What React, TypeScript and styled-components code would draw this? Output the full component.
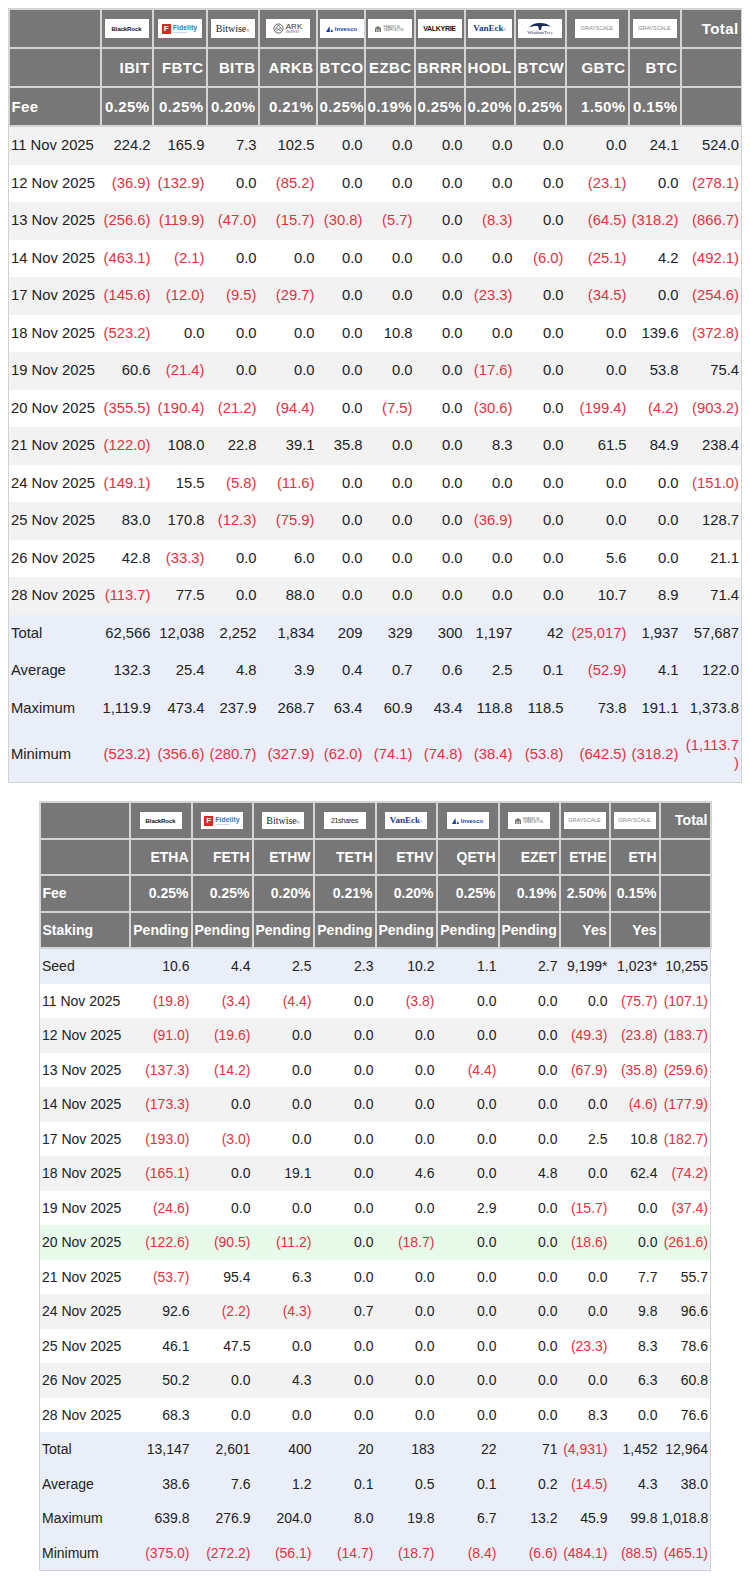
import React, { ReactNode } from 'react';
import styled, { createGlobalStyle } from 'styled-components';

type Brand =
  | 'blackrock'
  | 'fidelity'
  | 'bitwise'
  | 'ark'
  | 'invesco'
  | 'franklin'
  | 'valkyrie'
  | 'vaneck'
  | 'wisdomtree'
  | 'grayscale'
  | '21shares';

type Tone = 'white' | 'gray' | 'blue' | 'green';

interface FundCol {
  brand: Brand;
  ticker: string;
  fee: string;
  staking?: string;
  width: number;
}

interface DataRow {
  label: string;
  values: string[];
  tone: Tone;
}

const GlobalStyle = createGlobalStyle`
  body {
    margin: 8px;
    background: #fff;
    font-family: "Liberation Sans", Arial, sans-serif;
  }
`;

const Page = styled.div`
  display: flex;
  flex-direction: column;
  align-items: center;
  gap: 18px;
`;

const Table = styled.table<{ $compact?: boolean }>`
  border-collapse: collapse;
  table-layout: fixed;
  width: ${(p) => (p.$compact ? 671 : 733)}px;
  border: 1px solid #d2d2d2;
  font-size: ${(p) => (p.$compact ? 14 : 14.8)}px;
  color: #222;
`;

const Col = styled.col<{ $w: number }>`
  width: ${(p) => p.$w}px;
`;

const HeadCell = styled.th<{ $compact?: boolean; $align?: 'left' | 'center' | 'right' }>`
  background: #777;
  color: #fff;
  font-weight: bold;
  font-size: ${(p) => (p.$compact ? 14 : 15)}px;
  letter-spacing: ${(p) => (p.$compact ? 0 : 0.4)}px;
  text-align: ${(p) => p.$align || 'right'};
  height: ${(p) => (p.$compact ? 34.5 : 37)}px;
  padding: 0 2px;
  border: 2px solid #d4d4d4;
  white-space: nowrap;
  overflow: visible;
`;

const Row = styled.tr<{ $tone: Tone }>`
  background: ${(p) =>
    ({ white: '#fff', gray: '#f2f2f2', blue: '#e9eef8', green: '#e8fbea' })[p.$tone]};
`;

const Cell = styled.td<{ $compact?: boolean; $neg?: boolean; $label?: boolean; $wrap?: boolean }>`
  padding: ${(p) => (p.$compact ? '9px 2px' : '10px 2px')};
  line-height: ${(p) => (p.$compact ? 16.5 : 17.5)}px;
  text-align: ${(p) => (p.$label ? 'left' : 'right')};
  color: ${(p) => (p.$neg ? '#e2323d' : '#222')};
  white-space: ${(p) => (p.$wrap ? 'normal' : 'nowrap')};
  overflow-wrap: ${(p) => (p.$wrap ? 'anywhere' : 'normal')};
  overflow: visible;
`;

// ---- logos ----

const LogoBox = styled.span<{ $compact?: boolean }>`
  display: inline-flex;
  align-items: center;
  justify-content: center;
  gap: 2px;
  width: ${(p) => (p.$compact ? 42 : 44)}px;
  height: ${(p) => (p.$compact ? 17 : 19)}px;
  background: #fff;
  overflow: hidden;
  vertical-align: middle;
  letter-spacing: 0;
`;

const Word = styled.span<{
  $size: number;
  $color?: string;
  $weight?: number;
  $serif?: boolean;
  $spacing?: number;
}>`
  font-family: ${(p) =>
    p.$serif ? '"Liberation Serif", "Times New Roman", serif' : '"Liberation Sans", Arial, sans-serif'};
  font-size: ${(p) => p.$size}px;
  font-weight: ${(p) => p.$weight || 400};
  color: ${(p) => p.$color || '#111'};
  letter-spacing: ${(p) => p.$spacing || 0}px;
  line-height: 1;
  white-space: nowrap;
`;

const Stack = styled.span<{ $center?: boolean }>`
  display: inline-flex;
  flex-direction: column;
  align-items: ${(p) => (p.$center ? 'center' : 'flex-start')};
  line-height: 1;
`;

const FidelityMark = styled.span`
  display: inline-flex;
  align-items: center;
  justify-content: center;
  width: 9px;
  height: 10px;
  background: #d52b1e;
  color: #fff;
  font-size: 8px;
  font-weight: bold;
  font-family: "Liberation Sans", Arial, sans-serif;
`;

const logoContent = (brand: Brand): ReactNode => {
  switch (brand) {
    case 'blackrock':
      return (
        <Word $size={6} $weight={700} $spacing={-0.1}>
          BlackRock
        </Word>
      );
    case 'fidelity':
      return (
        <>
          <FidelityMark>F</FidelityMark>
          <Stack>
            <Word $size={7} $color="#3a78c2" $weight={700}>
              Fidelity
            </Word>
            <Word $size={2} $color="#7a9ac2">
              INVESTMENTS
            </Word>
          </Stack>
        </>
      );
    case 'bitwise':
      return (
        <Word $size={10} $serif $color="#222">
          Bitwise
          <Word $size={4} $color="#222">
            ®
          </Word>
        </Word>
      );
    case 'ark':
      return (
        <>
          <svg width="11" height="11" viewBox="0 0 12 12">
            <circle cx="6" cy="6" r="5" fill="none" stroke="#333" strokeWidth="0.8" />
            <path d="M2 8 L6 2 L10 8 M3 5 L9 9 M9 5 L3 9" fill="none" stroke="#333" strokeWidth="0.6" />
          </svg>
          <Stack>
            <Word $size={8} $color="#333">
              ARK
            </Word>
            <Word $size={3.5} $color="#555" $spacing={0.3}>
              INVEST
            </Word>
          </Stack>
        </>
      );
    case 'invesco':
      return (
        <>
          <svg width="7" height="6" viewBox="0 0 7 6">
            <path d="M0 6 L3.5 0 L4 6 Z M4.5 6 L6 3 L7 6 Z" fill="#1a3fa8" />
          </svg>
          <Word $size={6} $weight={700} $color="#1a3fa8">
            Invesco
          </Word>
        </>
      );
    case 'franklin':
      return (
        <>
          <svg width="6" height="6" viewBox="0 0 6 6">
            <path d="M0 6 V2 L3 0 L6 2 V6 Z" fill="#777" />
            <path d="M1.5 6 V3 M3 6 V3 M4.5 6 V3" stroke="#fff" strokeWidth="0.5" />
          </svg>
          <Stack>
            <Word $size={3} $color="#555" $spacing={0.2}>
              FRANKLIN
            </Word>
            <Word $size={3} $color="#555" $spacing={0.2}>
              TEMPLETON
            </Word>
          </Stack>
        </>
      );
    case 'valkyrie':
      return (
        <Word $size={7} $weight={700} $spacing={-0.3} $color="#111">
          VALKYRIE
        </Word>
      );
    case 'vaneck':
      return (
        <Word $size={9} $weight={700} $serif $color="#1b3b8c">
          VanEck
          <Word $size={3} $color="#1b3b8c">
            ®
          </Word>
        </Word>
      );
    case 'wisdomtree':
      return (
        <Stack $center>
          <svg width="26" height="8" viewBox="0 0 26 9">
            <path
              d="M1 6 C4 2 8 1 13 1 C18 1 22 2 25 5 C20 5 17 4 15 5 L14 9 H12 L11 5 C8 4 5 5 1 6 Z"
              fill="#1d2a5c"
            />
          </svg>
          <Word $size={5} $serif $color="#1d2a5c">
            WisdomTree
          </Word>
        </Stack>
      );
    case 'grayscale':
      return (
        <Word $size={5.5} $color="#8a8a8a" $spacing={-0.1}>
          GRAYSCALE
        </Word>
      );
    case '21shares':
      return (
        <Word $size={7} $color="#222" $spacing={-0.2}>
          21shares
        </Word>
      );
  }
};

const Logo: React.FC<{ brand: Brand; compact?: boolean }> = ({ brand, compact }) => (
  <LogoBox $compact={compact}>{logoContent(brand)}</LogoBox>
);

// ---- data ----

const btcCols: FundCol[] = [
  { brand: 'blackrock', ticker: 'IBIT', fee: '0.25%', width: 52 },
  { brand: 'fidelity', ticker: 'FBTC', fee: '0.25%', width: 54 },
  { brand: 'bitwise', ticker: 'BITB', fee: '0.20%', width: 52 },
  { brand: 'ark', ticker: 'ARKB', fee: '0.21%', width: 58 },
  { brand: 'invesco', ticker: 'BTCO', fee: '0.25%', width: 48 },
  { brand: 'franklin', ticker: 'EZBC', fee: '0.19%', width: 50 },
  { brand: 'valkyrie', ticker: 'BRRR', fee: '0.25%', width: 50 },
  { brand: 'vaneck', ticker: 'HODL', fee: '0.20%', width: 50 },
  { brand: 'wisdomtree', ticker: 'BTCW', fee: '0.25%', width: 51 },
  { brand: 'grayscale', ticker: 'GBTC', fee: '1.50%', width: 63 },
  { brand: 'grayscale', ticker: 'BTC', fee: '0.15%', width: 52 },
];

const ethCols: FundCol[] = [
  { brand: 'blackrock', ticker: 'ETHA', fee: '0.25%', staking: 'Pending', width: 62 },
  { brand: 'fidelity', ticker: 'FETH', fee: '0.25%', staking: 'Pending', width: 61 },
  { brand: 'bitwise', ticker: 'ETHW', fee: '0.20%', staking: 'Pending', width: 61 },
  { brand: '21shares', ticker: 'TETH', fee: '0.21%', staking: 'Pending', width: 62 },
  { brand: 'vaneck', ticker: 'ETHV', fee: '0.20%', staking: 'Pending', width: 61 },
  { brand: 'invesco', ticker: 'QETH', fee: '0.25%', staking: 'Pending', width: 62 },
  { brand: 'franklin', ticker: 'EZET', fee: '0.19%', staking: 'Pending', width: 61 },
  { brand: 'grayscale', ticker: 'ETHE', fee: '2.50%', staking: 'Yes', width: 50 },
  { brand: 'grayscale', ticker: 'ETH', fee: '0.15%', staking: 'Yes', width: 50 },
];

const split = (s: string) => s.trim().split(/\s+/);

const btcDays: [string, string][] = [
  ['11 Nov 2025', '224.2 165.9 7.3 102.5 0.0 0.0 0.0 0.0 0.0 0.0 24.1 524.0'],
  ['12 Nov 2025', '(36.9) (132.9) 0.0 (85.2) 0.0 0.0 0.0 0.0 0.0 (23.1) 0.0 (278.1)'],
  ['13 Nov 2025', '(256.6) (119.9) (47.0) (15.7) (30.8) (5.7) 0.0 (8.3) 0.0 (64.5) (318.2) (866.7)'],
  ['14 Nov 2025', '(463.1) (2.1) 0.0 0.0 0.0 0.0 0.0 0.0 (6.0) (25.1) 4.2 (492.1)'],
  ['17 Nov 2025', '(145.6) (12.0) (9.5) (29.7) 0.0 0.0 0.0 (23.3) 0.0 (34.5) 0.0 (254.6)'],
  ['18 Nov 2025', '(523.2) 0.0 0.0 0.0 0.0 10.8 0.0 0.0 0.0 0.0 139.6 (372.8)'],
  ['19 Nov 2025', '60.6 (21.4) 0.0 0.0 0.0 0.0 0.0 (17.6) 0.0 0.0 53.8 75.4'],
  ['20 Nov 2025', '(355.5) (190.4) (21.2) (94.4) 0.0 (7.5) 0.0 (30.6) 0.0 (199.4) (4.2) (903.2)'],
  ['21 Nov 2025', '(122.0) 108.0 22.8 39.1 35.8 0.0 0.0 8.3 0.0 61.5 84.9 238.4'],
  ['24 Nov 2025', '(149.1) 15.5 (5.8) (11.6) 0.0 0.0 0.0 0.0 0.0 0.0 0.0 (151.0)'],
  ['25 Nov 2025', '83.0 170.8 (12.3) (75.9) 0.0 0.0 0.0 (36.9) 0.0 0.0 0.0 128.7'],
  ['26 Nov 2025', '42.8 (33.3) 0.0 6.0 0.0 0.0 0.0 0.0 0.0 5.6 0.0 21.1'],
  ['28 Nov 2025', '(113.7) 77.5 0.0 88.0 0.0 0.0 0.0 0.0 0.0 10.7 8.9 71.4'],
];

const btcStats: [string, string][] = [
  ['Total', '62,566 12,038 2,252 1,834 209 329 300 1,197 42 (25,017) 1,937 57,687'],
  ['Average', '132.3 25.4 4.8 3.9 0.4 0.7 0.6 2.5 0.1 (52.9) 4.1 122.0'],
  ['Maximum', '1,119.9 473.4 237.9 268.7 63.4 60.9 43.4 118.8 118.5 73.8 191.1 1,373.8'],
  ['Minimum', '(523.2) (356.6) (280.7) (327.9) (62.0) (74.1) (74.8) (38.4) (53.8) (642.5) (318.2) (1,113.7)'],
];

const ethDays: [string, string][] = [
  ['11 Nov 2025', '(19.8) (3.4) (4.4) 0.0 (3.8) 0.0 0.0 0.0 (75.7) (107.1)'],
  ['12 Nov 2025', '(91.0) (19.6) 0.0 0.0 0.0 0.0 0.0 (49.3) (23.8) (183.7)'],
  ['13 Nov 2025', '(137.3) (14.2) 0.0 0.0 0.0 (4.4) 0.0 (67.9) (35.8) (259.6)'],
  ['14 Nov 2025', '(173.3) 0.0 0.0 0.0 0.0 0.0 0.0 0.0 (4.6) (177.9)'],
  ['17 Nov 2025', '(193.0) (3.0) 0.0 0.0 0.0 0.0 0.0 2.5 10.8 (182.7)'],
  ['18 Nov 2025', '(165.1) 0.0 19.1 0.0 4.6 0.0 4.8 0.0 62.4 (74.2)'],
  ['19 Nov 2025', '(24.6) 0.0 0.0 0.0 0.0 2.9 0.0 (15.7) 0.0 (37.4)'],
  ['20 Nov 2025', '(122.6) (90.5) (11.2) 0.0 (18.7) 0.0 0.0 (18.6) 0.0 (261.6)'],
  ['21 Nov 2025', '(53.7) 95.4 6.3 0.0 0.0 0.0 0.0 0.0 7.7 55.7'],
  ['24 Nov 2025', '92.6 (2.2) (4.3) 0.7 0.0 0.0 0.0 0.0 9.8 96.6'],
  ['25 Nov 2025', '46.1 47.5 0.0 0.0 0.0 0.0 0.0 (23.3) 8.3 78.6'],
  ['26 Nov 2025', '50.2 0.0 4.3 0.0 0.0 0.0 0.0 0.0 6.3 60.8'],
  ['28 Nov 2025', '68.3 0.0 0.0 0.0 0.0 0.0 0.0 8.3 0.0 76.6'],
];

const ethStats: [string, string][] = [
  ['Total', '13,147 2,601 400 20 183 22 71 (4,931) 1,452 12,964'],
  ['Average', '38.6 7.6 1.2 0.1 0.5 0.1 0.2 (14.5) 4.3 38.0'],
  ['Maximum', '639.8 276.9 204.0 8.0 19.8 6.7 13.2 45.9 99.8 1,018.8'],
  ['Minimum', '(375.0) (272.2) (56.1) (14.7) (18.7) (8.4) (6.6) (484.1) (88.5) (465.1)'],
];

const btcRows: DataRow[] = [
  ...btcDays.map(([label, v], i) => ({
    label,
    values: split(v),
    tone: (i % 2 === 0 ? 'gray' : 'white') as Tone,
  })),
  ...btcStats.map(([label, v]) => ({ label, values: split(v), tone: 'blue' as Tone })),
];

const ethRows: DataRow[] = [
  { label: 'Seed', values: split('10.6 4.4 2.5 2.3 10.2 1.1 2.7 9,199* 1,023* 10,255'), tone: 'blue' },
  ...ethDays.map(([label, v], i) => ({
    label,
    values: split(v),
    tone: (label.startsWith('20 Nov') ? 'green' : i % 2 === 0 ? 'white' : 'gray') as Tone,
  })),
  ...ethStats.map(([label, v]) => ({ label, values: split(v), tone: 'blue' as Tone })),
];

// ---- table ----

interface FlowTableProps {
  cols: FundCol[];
  rows: DataRow[];
  labelWidth: number;
  totalWidth: number;
  compact?: boolean;
}

const FlowTable: React.FC<FlowTableProps> = ({ cols, rows, labelWidth, totalWidth, compact }) => {
  const hasStaking = cols.some((c) => c.staking);
  return (
    <Table $compact={compact}>
      <colgroup>
        <Col $w={labelWidth} />
        {cols.map((c) => (
          <Col key={c.ticker} $w={c.width} />
        ))}
        <Col $w={totalWidth} />
      </colgroup>
      <thead>
        <tr>
          <HeadCell $compact={compact} />
          {cols.map((c) => (
            <HeadCell key={c.ticker} $compact={compact} $align="center">
              <Logo brand={c.brand} compact={compact} />
            </HeadCell>
          ))}
          <HeadCell $compact={compact}>Total</HeadCell>
        </tr>
        <tr>
          <HeadCell $compact={compact} />
          {cols.map((c) => (
            <HeadCell key={c.ticker} $compact={compact}>
              {c.ticker}
            </HeadCell>
          ))}
          <HeadCell $compact={compact} />
        </tr>
        <tr>
          <HeadCell $compact={compact} $align="left">
            Fee
          </HeadCell>
          {cols.map((c) => (
            <HeadCell key={c.ticker} $compact={compact}>
              {c.fee}
            </HeadCell>
          ))}
          <HeadCell $compact={compact} />
        </tr>
        {hasStaking && (
          <tr>
            <HeadCell $compact={compact} $align="left">
              Staking
            </HeadCell>
            {cols.map((c) => (
              <HeadCell key={c.ticker} $compact={compact}>
                {c.staking}
              </HeadCell>
            ))}
            <HeadCell $compact={compact} />
          </tr>
        )}
      </thead>
      <tbody>
        {rows.map((r) => (
          <Row key={r.label} $tone={r.tone}>
            <Cell $compact={compact} $label>
              {r.label}
            </Cell>
            {r.values.map((v, i) => (
              <Cell key={i} $compact={compact} $neg={v.startsWith('(')} $wrap={v.length > 8}>
                {v}
              </Cell>
            ))}
          </Row>
        ))}
      </tbody>
    </Table>
  );
};

const App: React.FC = () => (
  <>
    <GlobalStyle />
    <Page>
      <FlowTable cols={btcCols} rows={btcRows} labelWidth={92} totalWidth={61} />
      <FlowTable cols={ethCols} rows={ethRows} labelWidth={90} totalWidth={51} compact />
    </Page>
  </>
);

export default App;
